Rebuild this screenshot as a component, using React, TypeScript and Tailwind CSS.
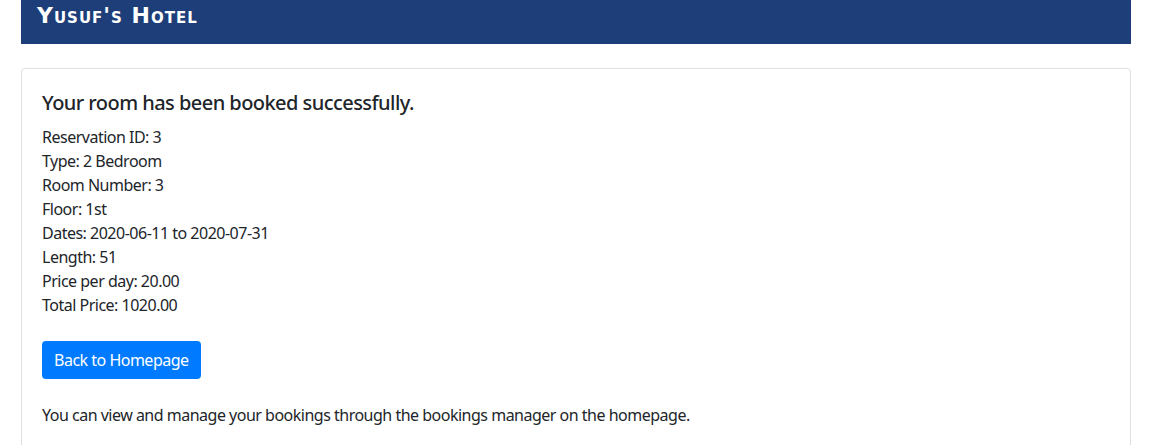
export default function App() {
  const lines = [
    "Reservation ID: 3",
    "Type: 2 Bedroom",
    "Room Number: 3",
    "Floor: 1st",
    "Dates: 2020-06-11 to 2020-07-31",
    "Length: 51",
    "Price per day: 20.00",
    "Total Price: 1020.00",
  ];
  return (
    <div className="min-h-[445px] bg-white pl-[21px] text-[#212529] [font-family:'Noto_Sans',sans-serif]">
      <div className="w-[1110px]">
        <header className="h-[44px] bg-[#1d3e78] pl-[16px] pt-[3px]">
          <h1 className="text-[22px] leading-[26px] font-black text-white [font-variant:small-caps] [font-family:'DejaVu_Sans',sans-serif] tracking-[1px]">
            Yusuf's Hotel
          </h1>
        </header>
        <div className="mt-[24px] rounded-[4px] border border-[#dfdfdf] px-[20px] pt-[22px] pb-[20px]">
          <h5 className="mb-[10px] text-[20px] leading-[24px] font-medium tracking-[-0.55px]">
            Your room has been booked successfully.
          </h5>
          <div className="text-[16px] leading-[24px] tracking-[-0.5px]">
            {lines.map((l) => (
              <div key={l}>{l}</div>
            ))}
          </div>
          <button className="mt-[24px] h-[38px] rounded-[4px] bg-[#007bff] px-[12px] text-[16px] leading-[24px] tracking-[-0.5px] text-white">
            Back to Homepage
          </button>
          <p className="mt-[24px] text-[16px] leading-[24px] tracking-[-0.5px]">
            You can view and manage your bookings through the bookings manager on the homepage.
          </p>
        </div>
      </div>
    </div>
  );
}
